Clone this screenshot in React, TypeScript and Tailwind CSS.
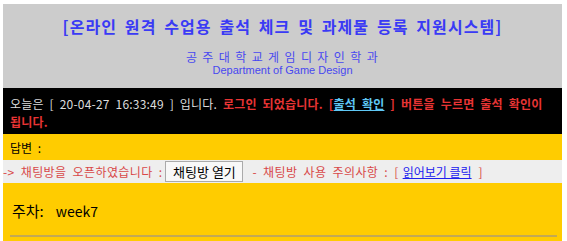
export default function App() {
  const ko = { fontFamily: '"Noto Sans CJK KR", "Noto Sans", sans-serif' }
  return (
    <div className="w-[567px] h-[241px] overflow-hidden bg-white pt-[4px] pl-[3px]" style={ko}>
      <div className="w-[559px]">
        {/* header */}
        <div className="bg-[#cccccc] h-[84px] flex flex-col items-center">
          <div className="mt-[11px] text-[16px] leading-[22px] font-bold text-[#3a3af5] tracking-[1.1px] [word-spacing:3px]">
            [온라인 원격 수업용 출석 체크 및 과제물 등록 지원시스템]
          </div>
          <div className="mt-[13px] text-[12px] leading-[14px] text-[#4848f0] tracking-[1.35px]">
            공 주 대 학 교 게 임 디 자 인 학 과
          </div>
          <div
            className="text-[11px] leading-[13px] text-[#4848f0]"
            style={{ fontFamily: '"Liberation Sans", Arial, sans-serif' }}
          >
            Department of Game Design
          </div>
        </div>

        {/* status */}
        <div className="bg-black h-[46px] pl-[7px] pr-[4px] pt-[7px] text-[12px] leading-[18px] [word-spacing:3px] whitespace-nowrap">
          <div>
            <span className="text-[#dddddd] tracking-[0.2px]">오늘은 [ 20-04-27 16:33:49 ] 입니다. </span>
            <span className="text-[#e83434] font-bold tracking-[0.2px]">로그인 되었습니다. [</span>
            <a className="text-[#5fc8f5] font-bold tracking-[0.2px] underline">출석 확인</a>
            <span className="text-[#e83434] font-bold tracking-[0.2px]"> ] 버튼을 누르면 출석 확인이</span>
          </div>
          <div className="text-[#e83434] font-bold tracking-[0.2px]">됩니다.</div>
        </div>

        {/* answer */}
        <div className="bg-[#ffcc00] h-[26px] pl-[7px] pt-[5px] text-[12px] leading-[18px] text-black [word-spacing:3px]">
          답변 :
        </div>

        {/* chat row */}
        <div className="bg-[#eeeeee] h-[23px] flex items-center text-[12px] text-[#d84848] whitespace-nowrap">
          <span className="tracking-[0.4px] [word-spacing:3px]">-&gt; 채팅방을 오픈하였습니다 :</span>
          <button className="ml-[3px] h-[21px] w-[78px] bg-[#f8f8f8] border border-[#aaaaaa] text-[13px] text-black leading-none">
            채팅방 열기
          </button>
          <span className="ml-[9px] tracking-[0.4px] [word-spacing:3px]">- 채팅방 사용 주의사항 : [</span>
          <a className="ml-[4px] text-[#2020ee] underline">읽어보기 클릭</a>
          <span className="ml-[7px]">]</span>
        </div>

        {/* week */}
        <div className="bg-[#ffcc00] h-[58px] pt-[18px]">
          <div className="pl-[9px] text-[15px] leading-[20px] text-black">
            주차:<span className="ml-[12px] text-[14px]">week7</span>
          </div>
          <div className="mt-[14px] ml-[7px] w-[547px] h-[2px] bg-[#c2a954]" />
        </div>
      </div>
    </div>
  )
}
